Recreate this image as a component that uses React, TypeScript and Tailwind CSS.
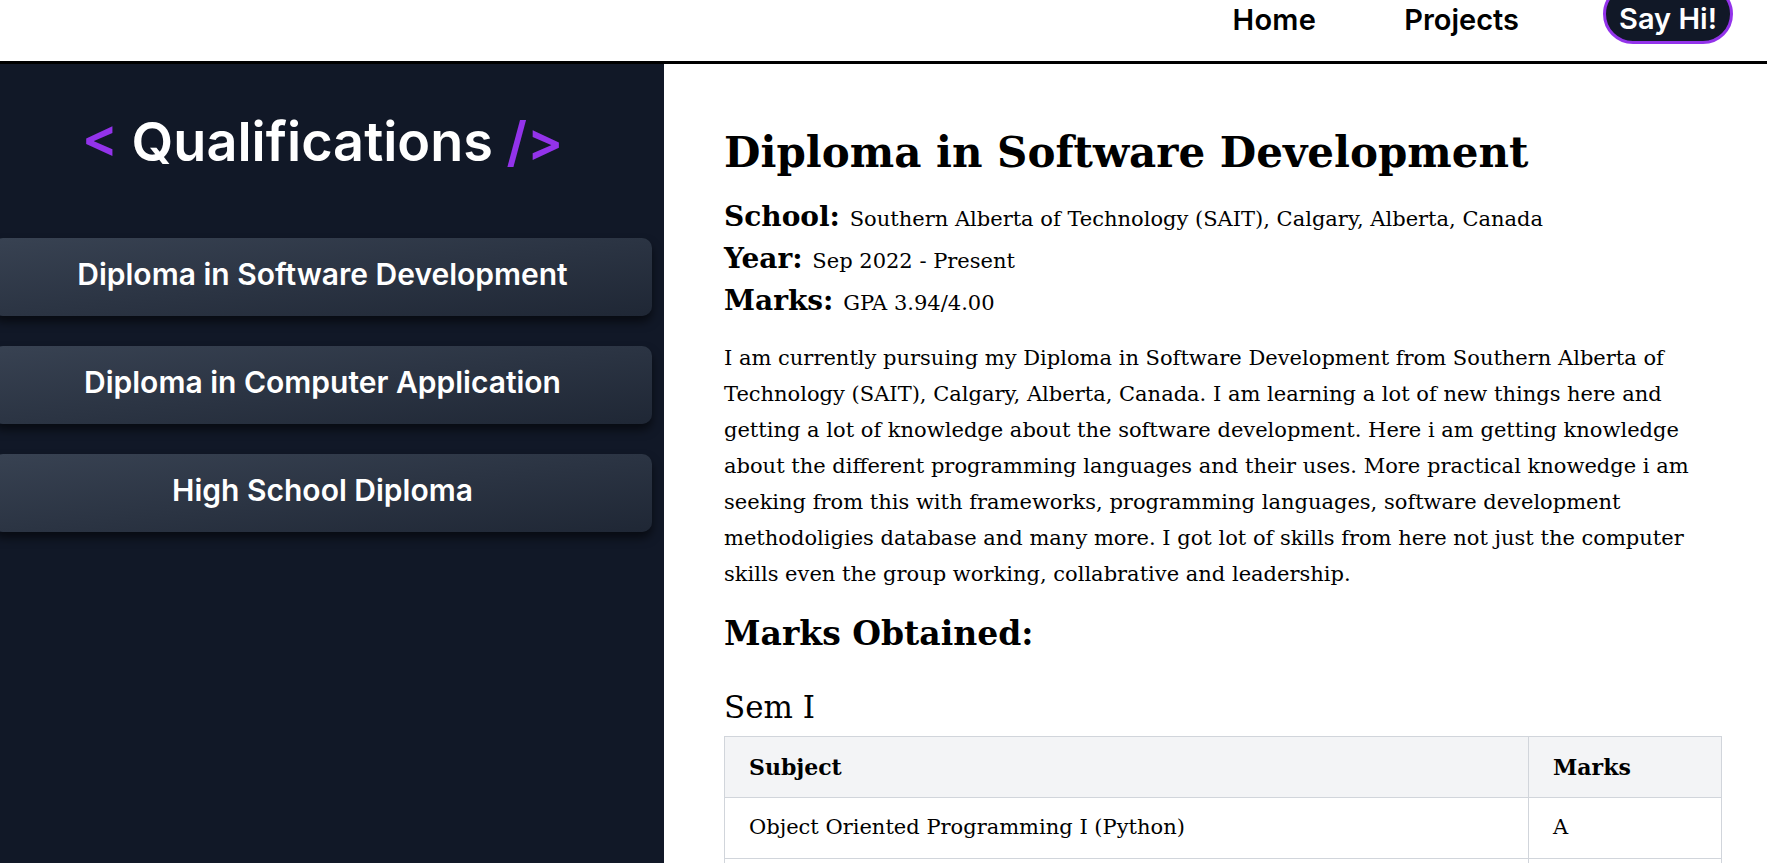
import React from "react";

const serif = { fontFamily: '"DejaVu Serif", Georgia, serif' };

export default function App() {
  const quals = [
    "Diploma in Software Development",
    "Diploma in Computer Application",
    "High School Diploma",
  ];
  return (
    <div className="min-h-screen bg-white overflow-hidden" style={{ fontFamily: 'Inter, "Noto Sans", sans-serif' }}>
      <nav className="h-[64px] border-b-[3px] border-black flex justify-end items-start pr-[34px]">
        <div className="flex items-center h-[40px]">
          <a className="text-[29px] font-semibold text-black leading-[40px] tracking-[0.3px]">Home</a>
          <a className="ml-[88px] text-[29px] font-semibold text-black leading-[40px]">Projects</a>
          <button className="ml-[84px] -mt-[12px] h-[60px] w-[130px] rounded-full border-[3px] border-[#9333ea] bg-[#111827] text-white text-[29px] font-semibold pt-[10px]">
            Say Hi!
          </button>
        </div>
      </nav>
      <div className="flex">
        <aside className="w-[664px] shrink-0 bg-[#111827] min-h-[799px] pb-10">
          <div className="ml-[-7px] w-[659px] flex flex-col">
            <h1 className="text-center text-[54px] font-semibold text-white leading-[66px] mt-[45px]">
              <span className="text-[#9333ea]">&lt;</span> Qualifications{" "}
              <span className="text-[#9333ea]">/&gt;</span>
            </h1>
            <div className="mt-[63px] flex flex-col gap-[30px]">
              {quals.map((q) => (
                <button
                  key={q}
                  className="h-[78px] w-full rounded-[10px] bg-linear-to-br from-[#384252] to-[#1f2735] text-white text-[30px] font-semibold pb-[6px] shadow-[0_6px_10px_rgba(0,0,0,0.55)]"
                >
                  {q}
                </button>
              ))}
            </div>
          </div>
        </aside>
        <main className="flex-1 pl-[60px] pr-[45px] text-black" style={serif}>
          <h2 className="text-[42px] font-bold leading-[50px] mt-[64px]">Diploma in Software Development</h2>
          <div className="mt-[18px]">
            <p className="text-[28px] leading-[42px] font-bold">
              School:{" "}
              <span className="text-[21px] leading-[21px] font-normal">
                Southern Alberta of Technology (SAIT), Calgary, Alberta, Canada
              </span>
            </p>
            <p className="text-[28px] leading-[42px] font-bold">
              Year: <span className="text-[21px] leading-[21px] font-normal">Sep 2022 - Present</span>
            </p>
            <p className="text-[28px] leading-[42px] font-bold">
              Marks: <span className="text-[21px] leading-[21px] font-normal">GPA 3.94/4.00</span>
            </p>
          </div>
          <p className="mt-[18px] text-[21px] leading-[36px] max-w-[975px]">
            I am currently pursuing my Diploma in Software Development from Southern Alberta of Technology (SAIT),
            Calgary, Alberta, Canada. I am learning a lot of new things here and getting a lot of knowledge about the
            software development. Here i am getting knowledge about the different programming languages and their uses.
            More practical knowedge i am seeking from this with frameworks, programming languages, software development
            methodoligies database and many more. I got lot of skills from here not just the computer skills even the
            group working, collabrative and leadership.
          </p>
          <h3 className="mt-[20px] text-[33px] font-bold leading-[44px]">Marks Obtained:</h3>
          <h4 className="mt-[29px] text-[31px] leading-[44px]">Sem I</h4>
          <table className="mt-[7px] w-full border-collapse text-[21px]">
            <thead>
              <tr className="bg-[#f3f4f6]">
                <th className="h-[61px] border border-[#d1d5db] px-[24px] text-left font-bold text-[22px]">Subject</th>
                <th className="h-[61px] w-[193px] border border-[#d1d5db] px-[24px] text-left font-bold text-[22px]">Marks</th>
              </tr>
            </thead>
            <tbody>
              <tr>
                <td className="h-[61px] border border-[#d1d5db] px-[24px]">Object Oriented Programming I (Python)</td>
                <td className="h-[61px] border border-[#d1d5db] px-[24px]">A</td>
              </tr>
              <tr>
                <td className="h-[72px] border border-[#d1d5db] px-[24px] align-top pt-[30px]">Web Development I</td>
                <td className="h-[72px] border border-[#d1d5db] px-[24px] align-top pt-[30px]">A</td>
              </tr>
            </tbody>
          </table>
        </main>
      </div>
    </div>
  );
}
